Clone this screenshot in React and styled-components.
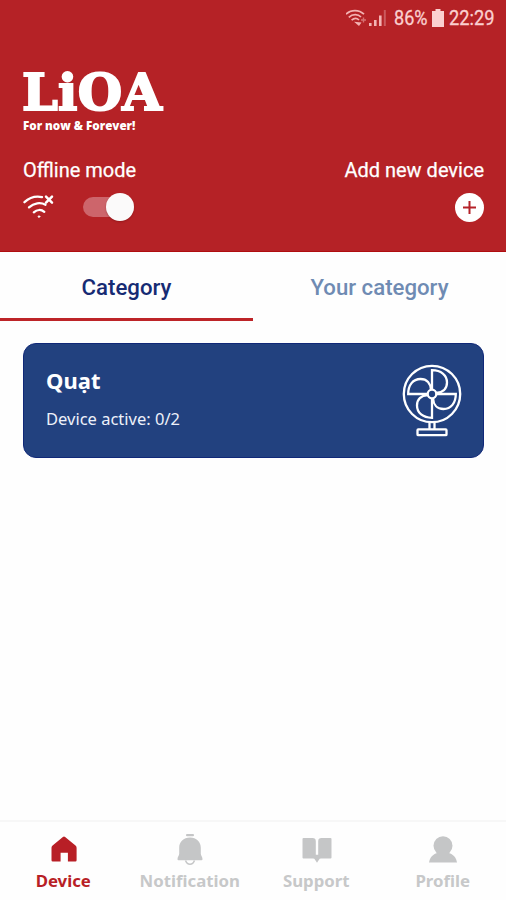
import styled, { createGlobalStyle } from 'styled-components'

const GlobalStyle = createGlobalStyle`
    * {
        box-sizing: border-box;
    }
    body {
        margin: 0;
        background: #fefefe;
    }
    svg {
        display: block;
        flex: none;
    }
`

const WifiStatus = () => (
    <svg width="23" height="18" viewBox="0 0 23 18" fill="none" stroke="#f3b3b3" strokeWidth="1.7">
        <path d="M0 5.2C5 .4 13 .4 18 5.2" />
        <path d="M2.8 8.3C6.6 4.8 12 4.9 15 8" />
        <path d="M5.6 11.2C8 9 11 9 13 11" />
        <path d="M8 12.7l5 4.3 2.5-3.5z" fill="#f3b3b3" stroke="none" />
        <path d="M17.5 8.5v5M15 11h5" strokeWidth="1.4" opacity=".55" />
    </svg>
)

const SignalBars = () => (
    <svg width="18" height="18" viewBox="0 0 18 18">
        <path d="M0 14h2.6v3H0zM5 11h2.6v6H5zM10 6.5h2.6V17H10z" fill="#f3b3b3" />
        <path d="M14.8 1h2v16h-2z" fill="#cb5a5e" />
    </svg>
)

const Battery = () => (
    <svg width="12" height="18" viewBox="0 0 12 18" fill="#fbd0d0">
        <path d="M3.5 0h5v2H12v16H0V2h3.5z" />
    </svg>
)

const WifiOff = () => (
    <svg width="32" height="26" viewBox="0 0 32 26" fill="none" stroke="#fff" strokeLinecap="round">
        <path d="M1.5 8.2C6.5 3.5 12.5 1.8 19 3.1" strokeWidth="2.3" />
        <path d="M6 13.4C11 8.8 17.5 8 22.5 10.8" strokeWidth="2.3" />
        <path d="M10.8 18.3C14 15.4 18.3 15.3 21.3 17.8" strokeWidth="2.3" />
        <circle cx="16" cy="22.6" r=".8" fill="#fff" strokeWidth="1" />
        <path d="M23 2.7l6 6M29 2.7l-6 6" strokeWidth="2.5" />
    </svg>
)

const Fan = () => (
    <svg width="60" height="74" viewBox="0 0 60 74" fill="none" stroke="#fff" strokeWidth="2.3">
        <circle cx="30" cy="31" r="28.2" />
        <circle cx="30" cy="31" r="4.3" />
        {[0, 90, 180, 270].map((angle) => (
            <path
                key={angle}
                d="M30 26.7V7.2C39 7.2 45 12 45 19.5C45 26 40.5 29.6 34.2 30"
                transform={`rotate(${angle} 30 31)`}
            />
        ))}
        <path d="M27.5 59.5V66M32.5 59.5V66" />
        <rect x="15.5" y="66.4" width="29" height="5.8" rx=".8" />
    </svg>
)

const HomeIcon = () => (
    <svg width="28" height="30" viewBox="0 0 28 30" fill="#b81f26">
        <path d="M12.9 1.9Q14 1 15.1 1.9L25.5 10.5Q26.6 11.5 26.6 12.8V25.3Q26.6 26.5 25.4 26.5H17.9V17.8H10.6V26.5H2.8Q1.5 26.5 1.5 25.3V12.8Q1.5 11.5 2.6 10.5z" />
    </svg>
)

const BellIcon = () => (
    <svg width="28" height="34" viewBox="0 0 28 34" fill="#c5c6c7">
        <rect x="10" y="1" width="8" height="2.3" rx="1" />
        <path d="M14 4.5C20.5 4.5 24.8 8.9 24.8 14.7V20.8C24.8 22.6 26.5 23.8 26.5 26.2Q26.5 27.2 25.5 27.2H2.5Q1.5 27.2 1.5 26.2C1.5 23.8 3.2 22.6 3.2 20.8V14.7C3.2 8.9 7.5 4.5 14 4.5z" />
        <path d="M9.5 27.5C10.7 30.5 12 31.2 14 31.2S17.3 30.5 18.5 27.5" fill="none" stroke="#c5c6c7" strokeWidth="1.6" />
    </svg>
)

const BookIcon = () => (
    <svg width="30" height="28" viewBox="0 0 30 28" fill="#c5c6c7">
        <path d="M1.5 2H10.5Q13.8 2 13.8 5.2V18.8H16.2V5.2Q16.2 2 19.5 2H28.5Q29.5 2 29.5 3V21.5Q29.5 22.5 28.5 22.5H19Q17.5 22.5 16.8 23.9L15 26.7L13.2 23.9Q12.5 22.5 11 22.5H1.5Q.5 22.5 .5 21.5V3Q.5 2 1.5 2z" />
    </svg>
)

const PersonIcon = () => (
    <svg width="28" height="28" viewBox="0 0 28 28" fill="#c5c6c7">
        <circle cx="14" cy="9.8" r="9.5" />
        <path d="M8.2 17H19.8C24 18.2 27.2 21.5 28 26.5H0C.8 21.5 4 18.2 8.2 17z" />
    </svg>
)

const tabs = ['Category', 'Your category']

const navItems = [
    { label: 'Device', Icon: HomeIcon, active: true },
    { label: 'Notification', Icon: BellIcon },
    { label: 'Support', Icon: BookIcon },
    { label: 'Profile', Icon: PersonIcon },
]

const App = () => {
    return (
        <Screen>
            <GlobalStyle />
            <Header>
                <StatusBar>
                    <WifiStatus />
                    <SignalBars />
                    <StatusText $width="38px" $left="7px" $scale={0.86}>86%</StatusText>
                    <Battery />
                    <StatusText $width="47px" $left="5px" $scale={0.87}>22:29</StatusText>
                </StatusBar>
                <Brand>
                    <Logo>LiOA</Logo>
                    <Slogan>For now & Forever!</Slogan>
                </Brand>
                <Controls>
                    <Control>
                        <ControlLabel>Offline mode</ControlLabel>
                        <ControlRow>
                            <WifiOff />
                            <Switch>
                                <Knob />
                            </Switch>
                        </ControlRow>
                    </Control>
                    <Control $end>
                        <ControlLabel>Add new device</ControlLabel>
                        <AddButton>
                            <svg width="13" height="13" viewBox="0 0 13 13" stroke="#b52229" strokeWidth="2">
                                <path d="M6.5 0v13M0 6.5h13" />
                            </svg>
                        </AddButton>
                    </Control>
                </Controls>
            </Header>
            <Tabs>
                {tabs.map((tab, i) => (
                    <Tab key={tab} $active={i === 0}>{tab}</Tab>
                ))}
            </Tabs>
            <Content>
                <DeviceCard>
                    <div>
                        <CardTitle>Quạt</CardTitle>
                        <CardText>Device active: 0/2</CardText>
                    </div>
                    <Fan />
                </DeviceCard>
            </Content>
            <BottomNav>
                {navItems.map(({ label, Icon, active }) => (
                    <NavItem key={label} $active={active}>
                        <NavIcon>
                            <Icon />
                        </NavIcon>
                        {label}
                    </NavItem>
                ))}
            </BottomNav>
        </Screen>
    )
}

const Screen = styled.div`
    display: flex;
    flex-direction: column;
    width: 506px;
    height: 900px;
    overflow: hidden;
    background: #fefefe;
    font-family: Roboto, sans-serif;
`
const Header = styled.header`
    height: 252px;
    background: #b52226;
    color: #fff;
    border-bottom: 1px solid #b00d10;
`
const StatusBar = styled.div`
    display: flex;
    align-items: center;
    justify-content: flex-end;
    height: 36px;
    padding-right: 10px;
    color: #fbd0d0;
`
const StatusText = styled.span`
    width: ${({ $width }) => $width};
    margin-left: ${({ $left }) => $left};
    font-size: 21px;
    line-height: 24px;
    white-space: nowrap;
    -webkit-text-stroke: 0.3px #fbd0d0;
    transform: scaleX(${({ $scale }) => $scale});
    transform-origin: left;
`
const Brand = styled.div`
    padding: 30px 0 0 22px;
`
const Logo = styled.div`
    font-family: 'DejaVu Serif', serif;
    font-weight: 700;
    font-size: 51px;
    line-height: 53px;
    letter-spacing: 0.2px;
    -webkit-text-stroke: 2px #fff;
`
const Slogan = styled.div`
    padding-left: 1px;
    font-family: 'Open Sans', sans-serif;
    font-weight: 800;
    font-size: 11.6px;
    line-height: 14px;
`
const Controls = styled.div`
    display: flex;
    justify-content: space-between;
    padding: 25px 22px 0 23px;
`
const Control = styled.div`
    display: flex;
    flex-direction: column;
    align-items: ${({ $end }) => ($end ? 'flex-end' : 'flex-start')};
`
const ControlLabel = styled.span`
    font-size: 20px;
    line-height: 24px;
    -webkit-text-stroke: 0.25px #fff;
`
const ControlRow = styled.div`
    display: flex;
    align-items: center;
    gap: 28px;
    margin-top: 12px;
`
const Switch = styled.div`
    display: flex;
    align-items: center;
    justify-content: flex-end;
    width: 51px;
    height: 20px;
    border-radius: 10px;
    background: #cd656b;
`
const Knob = styled.div`
    flex: none;
    width: 28px;
    height: 28px;
    border-radius: 50%;
    background: #fbfafa;
    box-shadow: 0 1px 2px rgba(80, 0, 0, 0.3);
`
const AddButton = styled.div`
    display: flex;
    align-items: center;
    justify-content: center;
    width: 29px;
    height: 29px;
    margin-top: 11px;
    border-radius: 50%;
    background: #fff;
`
const Tabs = styled.div`
    display: flex;
    height: 69px;
`
const Tab = styled.div`
    flex: 1;
    display: flex;
    align-items: center;
    justify-content: center;
    padding-top: 3px;
    border-bottom: 3px solid ${({ $active }) => ($active ? '#bd2428' : 'transparent')};
    color: ${({ $active }) => ($active ? '#162b73' : '#6f8bb3')};
    font-size: 22.2px;
    font-weight: 500;
`
const Content = styled.main`
    flex: 1;
    padding: 22px 22px 0 23px;
`
const DeviceCard = styled.div`
    display: flex;
    justify-content: space-between;
    height: 115px;
    padding: 19px 21.5px 0 22px;
    border: 1px solid #102878;
    border-radius: 13px;
    background: #22417f;
    color: #fff;
    font-family: 'Noto Sans', sans-serif;
`
const CardTitle = styled.div`
    padding-top: 2px;
    font-size: 22px;
    font-weight: 700;
    line-height: 30px;
`
const CardText = styled.div`
    margin-top: 12px;
    font-size: 16.5px;
    line-height: 24px;
    color: #eef1fa;
`
const BottomNav = styled.nav`
    display: flex;
    height: 80px;
    border-top: 2px solid #f7f7f7;
`
const NavItem = styled.div`
    flex: 1;
    display: flex;
    flex-direction: column;
    align-items: center;
    color: ${({ $active }) => ($active ? '#b81f26' : '#c7c8c9')};
    font-family: 'Noto Sans', sans-serif;
    font-size: 16.8px;
    font-weight: 700;
    line-height: 24px;
`
const NavIcon = styled.div`
    display: flex;
    align-items: center;
    height: 47px;
    padding: 9px 0 0 1px;
`
export default App
